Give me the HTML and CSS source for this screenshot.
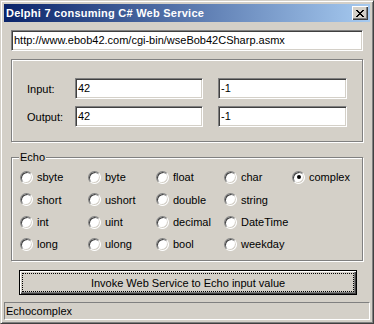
FILE: index.html
```
<!DOCTYPE html>
<html lang="en">
<head>
    <meta charset="UTF-8">
    <title>Delphi 7 consuming C# Web Service</title>
    <link rel="stylesheet" href="styles.css">
</head>
<body>
    <div class="window">
        <div class="titlebar">
            <span class="title">Delphi 7 consuming C# Web Service</span>
            <span class="close">
                <svg width="8" height="7" viewBox="0 0 8 7" shape-rendering="crispEdges">
                    <path fill="#000" d="M0 0h2v1H0zM6 0h2v1H6zM1 1h2v1H1zM5 1h2v1H5zM2 2h4v1H2zM3 3h2v1H3zM2 4h4v1H2zM1 5h2v1H1zM5 5h2v1H5zM0 6h2v1H0zM6 6h2v1H6z"/>
                </svg>
            </span>
        </div>
        <div class="client">
            <div class="edit url">http://www.ebob42.com/cgi-bin/wseBob42CSharp.asmx</div>

            <div class="group params">
                <span class="label">Input:</span>
                <div class="edit">42</div>
                <div class="edit">-1</div>
                <span class="label">Output:</span>
                <div class="edit">42</div>
                <div class="edit">-1</div>
            </div>

            <div class="group echo">
                <span class="caption">Echo</span>
                <div class="radios">
                    <label class="radio"><span class="dot"></span>sbyte</label>
                    <label class="radio"><span class="dot"></span>short</label>
                    <label class="radio"><span class="dot"></span>int</label>
                    <label class="radio"><span class="dot"></span>long</label>
                    <label class="radio"><span class="dot"></span>byte</label>
                    <label class="radio"><span class="dot"></span>ushort</label>
                    <label class="radio"><span class="dot"></span>uint</label>
                    <label class="radio"><span class="dot"></span>ulong</label>
                    <label class="radio"><span class="dot"></span>float</label>
                    <label class="radio"><span class="dot"></span>double</label>
                    <label class="radio"><span class="dot"></span>decimal</label>
                    <label class="radio"><span class="dot"></span>bool</label>
                    <label class="radio"><span class="dot"></span>char</label>
                    <label class="radio"><span class="dot"></span>string</label>
                    <label class="radio"><span class="dot"></span>DateTime</label>
                    <label class="radio"><span class="dot"></span>weekday</label>
                    <label class="radio"><span class="dot checked"></span>complex</label>
                </div>
            </div>

            <div class="button"><span class="focus">Invoke Web Service to Echo input value</span></div>

            <div class="statusbar"><div class="panel">Echocomplex</div></div>
        </div>
    </div>
</body>
</html>
```

FILE: styles.css
```
body {
    margin: 0;
    font-family: "Liberation Sans", Arial, sans-serif;
    font-size: 11px;
    color: #000;
}
.window {
    width: 374px;
    height: 324px;
    box-sizing: border-box;
    background: #d4d0c8;
    border: 1px solid;
    border-color: #d4d0c8 #404040 #404040 #d4d0c8;
    box-shadow: inset 1px 1px #fff, inset -1px -1px #808080;
    padding: 3px;
    display: flex;
    flex-direction: column;
}
.titlebar {
    height: 18px;
    flex: none;
    display: flex;
    align-items: center;
    justify-content: space-between;
    padding-left: 2px;
    margin-bottom: 1px;
    background: linear-gradient(to right, #0a246a, #a6caf0);
}
.title {
    color: #fff;
    font-weight: bold;
    letter-spacing: 0.25px;
}
.close {
    width: 16px;
    height: 14px;
    box-sizing: border-box;
    margin-right: 2px;
    display: flex;
    align-items: center;
    justify-content: center;
    background: #d4d0c8;
    box-shadow: inset 1px 1px #fff, inset -1px -1px #404040, inset -2px -2px #808080;
}
.close svg {
    display: block;
}
.client {
    flex: 1;
    display: flex;
    flex-direction: column;
}
.edit {
    height: 21px;
    box-sizing: border-box;
    background: #fff;
    border: 1px solid;
    border-color: #808080 #fff #fff #808080;
    box-shadow: inset 1px 1px #404040, inset -1px -1px #d4d0c8;
    padding: 0 2px;
    line-height: 19px;
    white-space: nowrap;
}
.url {
    margin: 7px 7px 0;
}
.group {
    position: relative;
    border: 1px solid #808080;
    box-shadow: inset 1px 1px #fff, 1px 1px #fff;
    margin: 0 7px;
}
.params {
    margin-top: 8px;
    height: 83px;
    box-sizing: border-box;
    padding: 18px 0 0 15px;
    display: grid;
    grid-template-columns: 33px 128px 129px;
    grid-template-rows: 21px 21px;
    column-gap: 15px;
    row-gap: 7px;
    align-items: center;
}
.label {
    white-space: nowrap;
}
.echo {
    margin-top: 15px;
    height: 104px;
    box-sizing: border-box;
    padding: 8px 0 0 8px;
}
.caption {
    position: absolute;
    top: -7px;
    left: 7px;
    padding: 0 1px;
    background: #d4d0c8;
}
.radios {
    display: grid;
    grid-auto-flow: column;
    grid-template-columns: repeat(5, 68px);
    grid-template-rows: 22px 23px 22px 22px;
}
.radio {
    display: flex;
    align-items: center;
}
.dot {
    width: 11px;
    height: 11px;
    margin-right: 4px;
    border-radius: 50%;
    background: #fff;
    border: 1px solid;
    border-color: #808080 #fff #fff #808080;
    box-shadow: inset 1px 1px #404040, inset -1px -1px #d4d0c8;
    display: flex;
    align-items: center;
    justify-content: center;
}
.dot.checked::after {
    content: "";
    width: 4px;
    height: 4px;
    border-radius: 50%;
    background: #000;
}
.button {
    margin: 9px 0 0 15px;
    width: 338px;
    height: 25px;
    box-sizing: border-box;
    border: 1px solid #000;
    box-shadow: inset 1px 1px #fff, inset -1px -1px #404040, inset -2px -2px #808080;
    padding: 2px;
    display: flex;
}
.focus {
    flex: 1;
    border: 1px dotted #000;
    display: flex;
    align-items: center;
    justify-content: center;
}
.statusbar {
    margin-top: auto;
    height: 19px;
    padding-top: 1px;
    box-sizing: border-box;
}
.panel {
    height: 18px;
    box-sizing: border-box;
    border: 1px solid;
    border-color: #808080 #fff #fff #808080;
    padding-left: 1px;
    line-height: 16px;
}
```
